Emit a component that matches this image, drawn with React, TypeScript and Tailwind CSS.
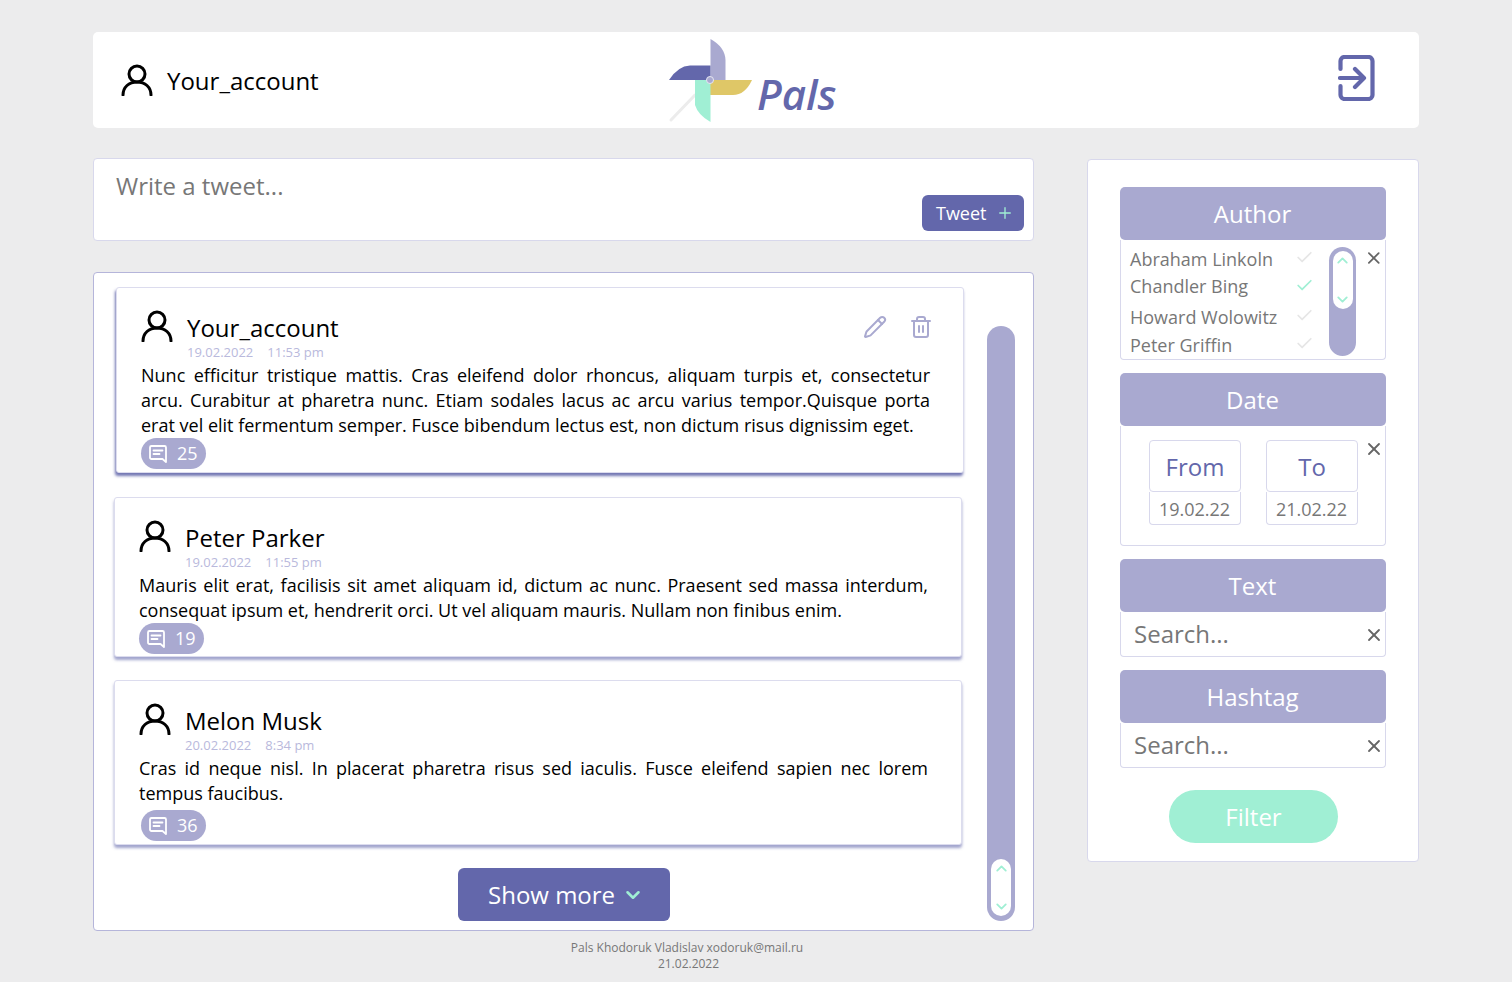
import React from "react";
import { Check, ChevronDown, ChevronUp, Pencil, Plus, Trash2, X } from "lucide-react";

function UserIcon({ className }: { className?: string }) {
  return (
    <svg className={className} width="32" height="32" viewBox="0 0 32 32" fill="none" stroke="#000" strokeWidth="3" strokeLinecap="round">
      <circle cx="16" cy="10" r="8" />
      <path d="M2 31c0-8 6-13 14-13s14 5 14 13" />
    </svg>
  );
}

function CommentIcon() {
  return (
    <svg width="20" height="20" viewBox="0 0 20 20" fill="none" stroke="#fff" strokeWidth="1.8" strokeLinecap="round" strokeLinejoin="round">
      <path d="M3.500 2h13a1.500 1.500 0 0 1 1.500 1.500v14.500l-3.500-3h-11a1.500 1.500 0 0 1-1.500-1.500v-10a1.500 1.500 0 0 1 1.500-1.500z" />
      <path d="M5.500 6.500h9M5.500 10h6" />
    </svg>
  );
}

function Logo() {
  return (
    <svg width="90" height="88" viewBox="665 36 90 88" className="shrink-0">
      <path d="M695 95L671 120" stroke="#ececec" strokeWidth="3" strokeLinecap="round" />
      <path d="M710.500 39Q725 47 725.500 60V80H710.500Z" fill="#a9a9d0" />
      <path d="M669 80Q678 66 690 65.500H710.500V80Z" fill="#6367ab" />
      <path d="M710 80H752Q745 95 733 95H710Z" fill="#dfc767" />
      <path d="M695 80V105Q698 115 710.500 122V80Z" fill="#a0efd4" />
      <circle cx="710" cy="80" r="3.500" fill="#a9a9d0" stroke="#e8e8f2" strokeWidth="1" />
    </svg>
  );
}

function Thumb({ h }: { h: string }) {
  return (
    <div className={`w-[20px] ${h} bg-white rounded-full flex flex-col items-center justify-between py-[1px]`}>
      <ChevronUp size={17} color="#a0efd4" strokeWidth={2.6} />
      <ChevronDown size={17} color="#a0efd4" strokeWidth={2.6} />
    </div>
  );
}

function Badge({ n, className }: { n: number; className?: string }) {
  return (
    <div className={`w-[65px] h-[31px] bg-[#a9a9d0] rounded-full flex items-center pl-[7px] gap-[9px] text-[18px] text-white ${className ?? ""}`}>
      <CommentIcon />
      <span>{n}</span>
    </div>
  );
}

function Card({
  name,
  date,
  time,
  text,
  n,
  className,
  badgeClass,
  actions,
}: {
  name: string;
  date: string;
  time: string;
  text: string;
  n: number;
  className: string;
  badgeClass?: string;
  actions?: boolean;
}) {
  return (
    <div className={`w-[848px] bg-white border border-[#dcdcee] rounded-[3px] pl-[24px] pr-[33px] pt-[24px] ${className}`}>
      <div className="flex">
        <UserIcon className="mt-[-2px] mr-[14px] shrink-0" />
        <div className="flex-1">
          <div className="text-[24px] leading-[32px] text-black">{name}</div>
          <div className="text-[13px] leading-[16px] text-[#b9b9dc] flex gap-[14px]">
            <span>{date}</span>
            <span>{time}</span>
          </div>
        </div>
        {actions && (
          <div className="flex gap-[22px] mt-[3px] mr-[-3px] text-[#a9a9d0]">
            <Pencil size={24} strokeWidth={2} />
            <Trash2 size={24} strokeWidth={2} />
          </div>
        )}
      </div>
      <p className="mt-[3px] text-[18px] leading-[25px] text-black text-justify">{text}</p>
      <Badge n={n} className={badgeClass} />
    </div>
  );
}

function SectionHead({ title }: { title: string }) {
  return (
    <div className="h-[53px] bg-[#a9a9d0] rounded-[5px] flex items-center justify-center pr-[1px] text-[24px] text-white">
      {title}
    </div>
  );
}

function Row({ name, on, className }: { name: string; on?: boolean; className?: string }) {
  return (
    <div className={`h-[26px] flex items-center justify-between text-[18px] leading-[26px] text-[#777] ${className ?? ""}`}>
      <span>{name}</span>
      <Check size={19} color={on ? "#a0efd4" : "#e6e6e6"} strokeWidth={2.2} className={on ? "mr-[-2px] mt-[-2px]" : "mr-[-2px] mt-[-3px]"} />
    </div>
  );
}

function DateBox({ title, value }: { title: string; value: string }) {
  return (
    <div className="w-[92px] h-[85px] shrink-0 flex flex-col">
      <div className="h-[52px] border border-[#d8d8ec] rounded-[4px] flex items-center justify-center pt-[2px] text-[24px] text-[#6367ab]">
        {title}
      </div>
      <div className="flex-1 border border-t-0 border-[#d8d8ec] rounded-b-[4px] flex items-center justify-center pt-[2px] pr-[1px] text-[18px] text-[#777]">
        {value}
      </div>
    </div>
  );
}

function SearchSection({ title, className }: { title: string; className: string }) {
  return (
    <div className={className}>
      <SectionHead title={title} />
      <div className="h-[45px] border border-t-0 border-[#d8d8ec] rounded-b-[4px] flex items-center justify-between pl-[13px] pr-[1px] text-[24px] text-[#777]">
        <span>Search...</span>
        <X size={20} color="#666" strokeWidth={2.2} className="mt-[1px]" />
      </div>
    </div>
  );
}

export default function App() {
  return (
    <div className="w-[1512px] h-[982px] overflow-hidden bg-[#ececed] px-[93px] pt-[32px] font-['Open_Sans',sans-serif]">
      <header className="h-[96px] bg-white rounded-[5px] flex items-center pl-[28px] pr-[43px]">
        <div className="w-[544px] flex items-center gap-[14px]">
          <UserIcon />
          <span className="text-[24px] text-black pt-[2px]">Your_account</span>
        </div>
        <Logo />
        <span className="ml-[2px] mt-[28px] text-[42px] leading-[50px] italic font-semibold text-[#6367ab]">Pals</span>
        <svg className="ml-auto mt-[-5px]" width="38" height="46" viewBox="0 0 38 46" fill="none" stroke="#6367ab" strokeWidth="4.200" strokeLinecap="round" strokeLinejoin="round">
          <path d="M2.500 14V6a4 4 0 0 1 4-4h24a4 4 0 0 1 4 4v34a4 4 0 0 1-4 4h-24a4 4 0 0 1-4-4v-9" />
          <path d="M2 23h23M17 14l9 9-9 9" />
        </svg>
      </header>

      <div className="flex items-start gap-[53px] mt-[30px]">
        <div className="w-[941px]">
          <div className="h-[83px] bg-white border border-[#d8d8ec] rounded-[4px] pl-[22px] pr-[9px] pt-[11px] flex flex-col">
            <div className="text-[24px] leading-[32px] text-[#777]">Write a tweet...</div>
            <button className="self-end mt-[-7px] w-[102px] h-[36px] bg-[#6367ab] rounded-[6px] flex items-center pl-[14px] gap-[9px] text-[18px] text-white">
              Tweet
              <Plus size={18} color="#a0efd4" strokeWidth={1.8} />
            </button>
          </div>

          <div className="mt-[31px] h-[659px] bg-white border border-[#b5b5da] rounded-[4px] flex">
            <div className="w-[893px] shrink-0">
              <Card
                className="mt-[14px] ml-[22px] h-[186px] shadow-[-1px_3px_3px_rgba(99,103,171,0.9)]"
                name="Your_account"
                date="19.02.2022"
                time="11:53 pm"
                actions
                n={25}
                text="Nunc efficitur tristique mattis. Cras eleifend dolor rhoncus, aliquam turpis et, consectetur arcu. Curabitur at pharetra nunc. Etiam sodales lacus ac arcu varius tempor.Quisque porta erat vel elit fermentum semper. Fusce bibendum lectus est, non dictum risus dignissim eget."
              />
              <Card
                className="mt-[24px] ml-[20px] h-[160px] shadow-[0_3px_3px_rgba(99,103,171,0.6)]"
                name="Peter Parker"
                date="19.02.2022"
                time="11:55 pm"
                n={19}
                text="Mauris elit erat, facilisis sit amet aliquam id, dictum ac nunc. Praesent sed massa interdum, consequat ipsum et, hendrerit orci. Ut vel aliquam mauris. Nullam non finibus enim."
              />
              <Card
                className="mt-[23px] ml-[20px] h-[165px] shadow-[0_3px_3px_rgba(99,103,171,0.6)]"
                badgeClass="mt-[4px] ml-[2px]"
                name="Melon Musk"
                date="20.02.2022"
                time="8:34 pm"
                n={36}
                text="Cras id neque nisl. In placerat pharetra risus sed iaculis. Fusce eleifend sapien nec lorem tempus faucibus."
              />
              <button className="mt-[23px] ml-[364px] w-[212px] h-[53px] bg-[#6367ab] rounded-[6px] flex items-center pl-[30px] gap-[7px] text-[24px] text-white">
                Show more
                <ChevronDown size={22} color="#a0efd4" strokeWidth={2.8} />
              </button>
            </div>
            <div className="mt-[53px] w-[28px] h-[595px] bg-[#a9a9d0] rounded-full flex flex-col items-center justify-end pb-[5px]">
              <Thumb h="h-[57px]" />
            </div>
          </div>

          <footer className="mt-[9px] ml-[434px] w-[320px] text-center text-[12px] leading-[16px] text-[#777]">
            <div>Pals Khodoruk Vladislav xodoruk@mail.ru</div>
            <div className="pl-[3px]">21.02.2022</div>
          </footer>
        </div>

        <aside className="w-[332px] h-[703px] mt-[1px] bg-white border border-[#d8d8ec] rounded-[4px] pl-[32px] pr-[32px] pt-[27px]">
          <SectionHead title="Author" />
          <div className="h-[120px] border border-t-0 border-[#d8d8ec] rounded-b-[4px] flex pl-[9px] pt-[6px] pr-[1px]">
            <div className="w-[182px] shrink-0">
              <Row name="Abraham Linkoln" />
              <Row name="Chandler Bing" on className="mt-[1px]" />
              <Row name="Howard Wolowitz" className="mt-[5px]" />
              <Row name="Peter Griffin" className="mt-[2px]" />
            </div>
            <div className="ml-[17px] mt-[1px] w-[28px] h-[109px] bg-[#a9a9d0] rounded-full flex flex-col items-center pt-[4px]">
              <Thumb h="h-[58px]" />
            </div>
            <X size={20} color="#666" strokeWidth={2.2} className="ml-[8px] mt-[2px]" />
          </div>

          <div className="mt-[13px]">
            <SectionHead title="Date" />
            <div className="h-[120px] border border-t-0 border-[#d8d8ec] rounded-b-[4px] flex pl-[28px] pr-[1px] pt-[14px]">
              <DateBox title="From" value="19.02.22" />
              <div className="ml-[25px]">
                <DateBox title="To" value="21.02.22" />
              </div>
              <X size={20} color="#666" strokeWidth={2.2} className="ml-[6px] mt-[-1px]" />
            </div>
          </div>

          <SearchSection title="Text" className="mt-[13px]" />
          <SearchSection title="Hashtag" className="mt-[13px]" />

          <button className="block mt-[22px] ml-[49px] w-[169px] h-[53px] bg-[#a0efd4] rounded-full text-[24px] text-white">
            Filter
          </button>
        </aside>
      </div>
    </div>
  );
}
